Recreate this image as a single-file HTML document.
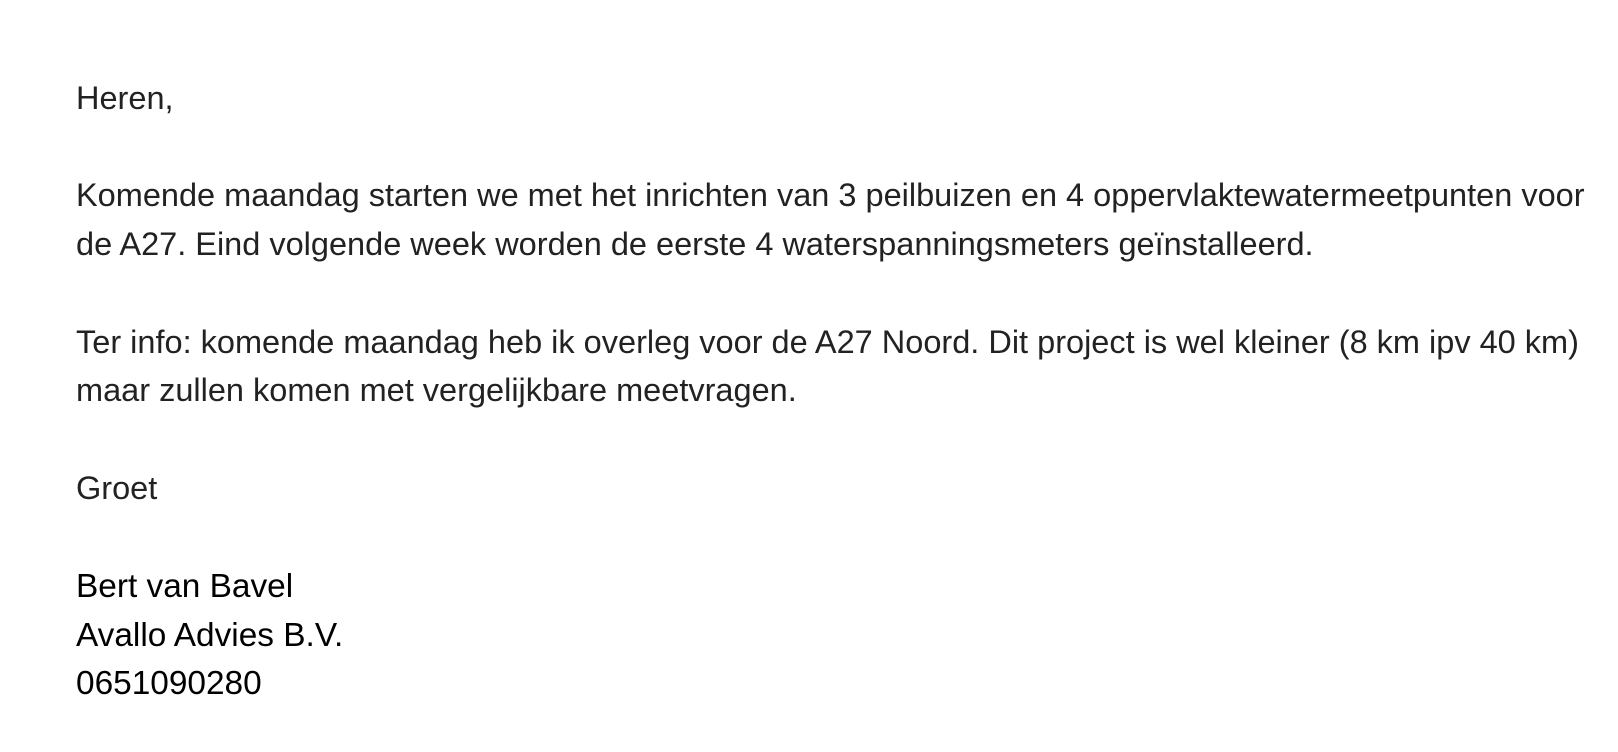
<!DOCTYPE html>
<html><head><meta charset="utf-8"><style>
html,body{margin:0;padding:0;background:#fff;width:1618px;height:752px;overflow:hidden}
.l{position:absolute;left:76px;font-family:"Liberation Sans",Arial,sans-serif;font-size:32.5px;line-height:48px;white-space:nowrap;color:#222}
.b{color:#000;font-size:33.4px}
</style></head><body>
<div class="l" style="top:74px">Heren,</div>
<div class="l" style="top:171px">Komende maandag starten we met het inrichten van 3 peilbuizen en 4 oppervlaktewatermeetpunten voor</div>
<div class="l" style="top:220px">de A27. Eind volgende week worden de eerste 4 waterspanningsmeters geïnstalleerd.</div>
<div class="l" style="top:318px">Ter info: komende maandag heb ik overleg voor de A27 Noord. Dit project is wel kleiner (8 km ipv 40 km)</div>
<div class="l" style="top:366px">maar zullen komen met vergelijkbare meetvragen.</div>
<div class="l" style="top:464px">Groet</div>
<div class="l b" style="top:563px">Bert van Bavel</div>
<div class="l b" style="top:612px">Avallo Advies B.V.</div>
<div class="l b" style="top:660px">0651090280</div>
</body></html>
